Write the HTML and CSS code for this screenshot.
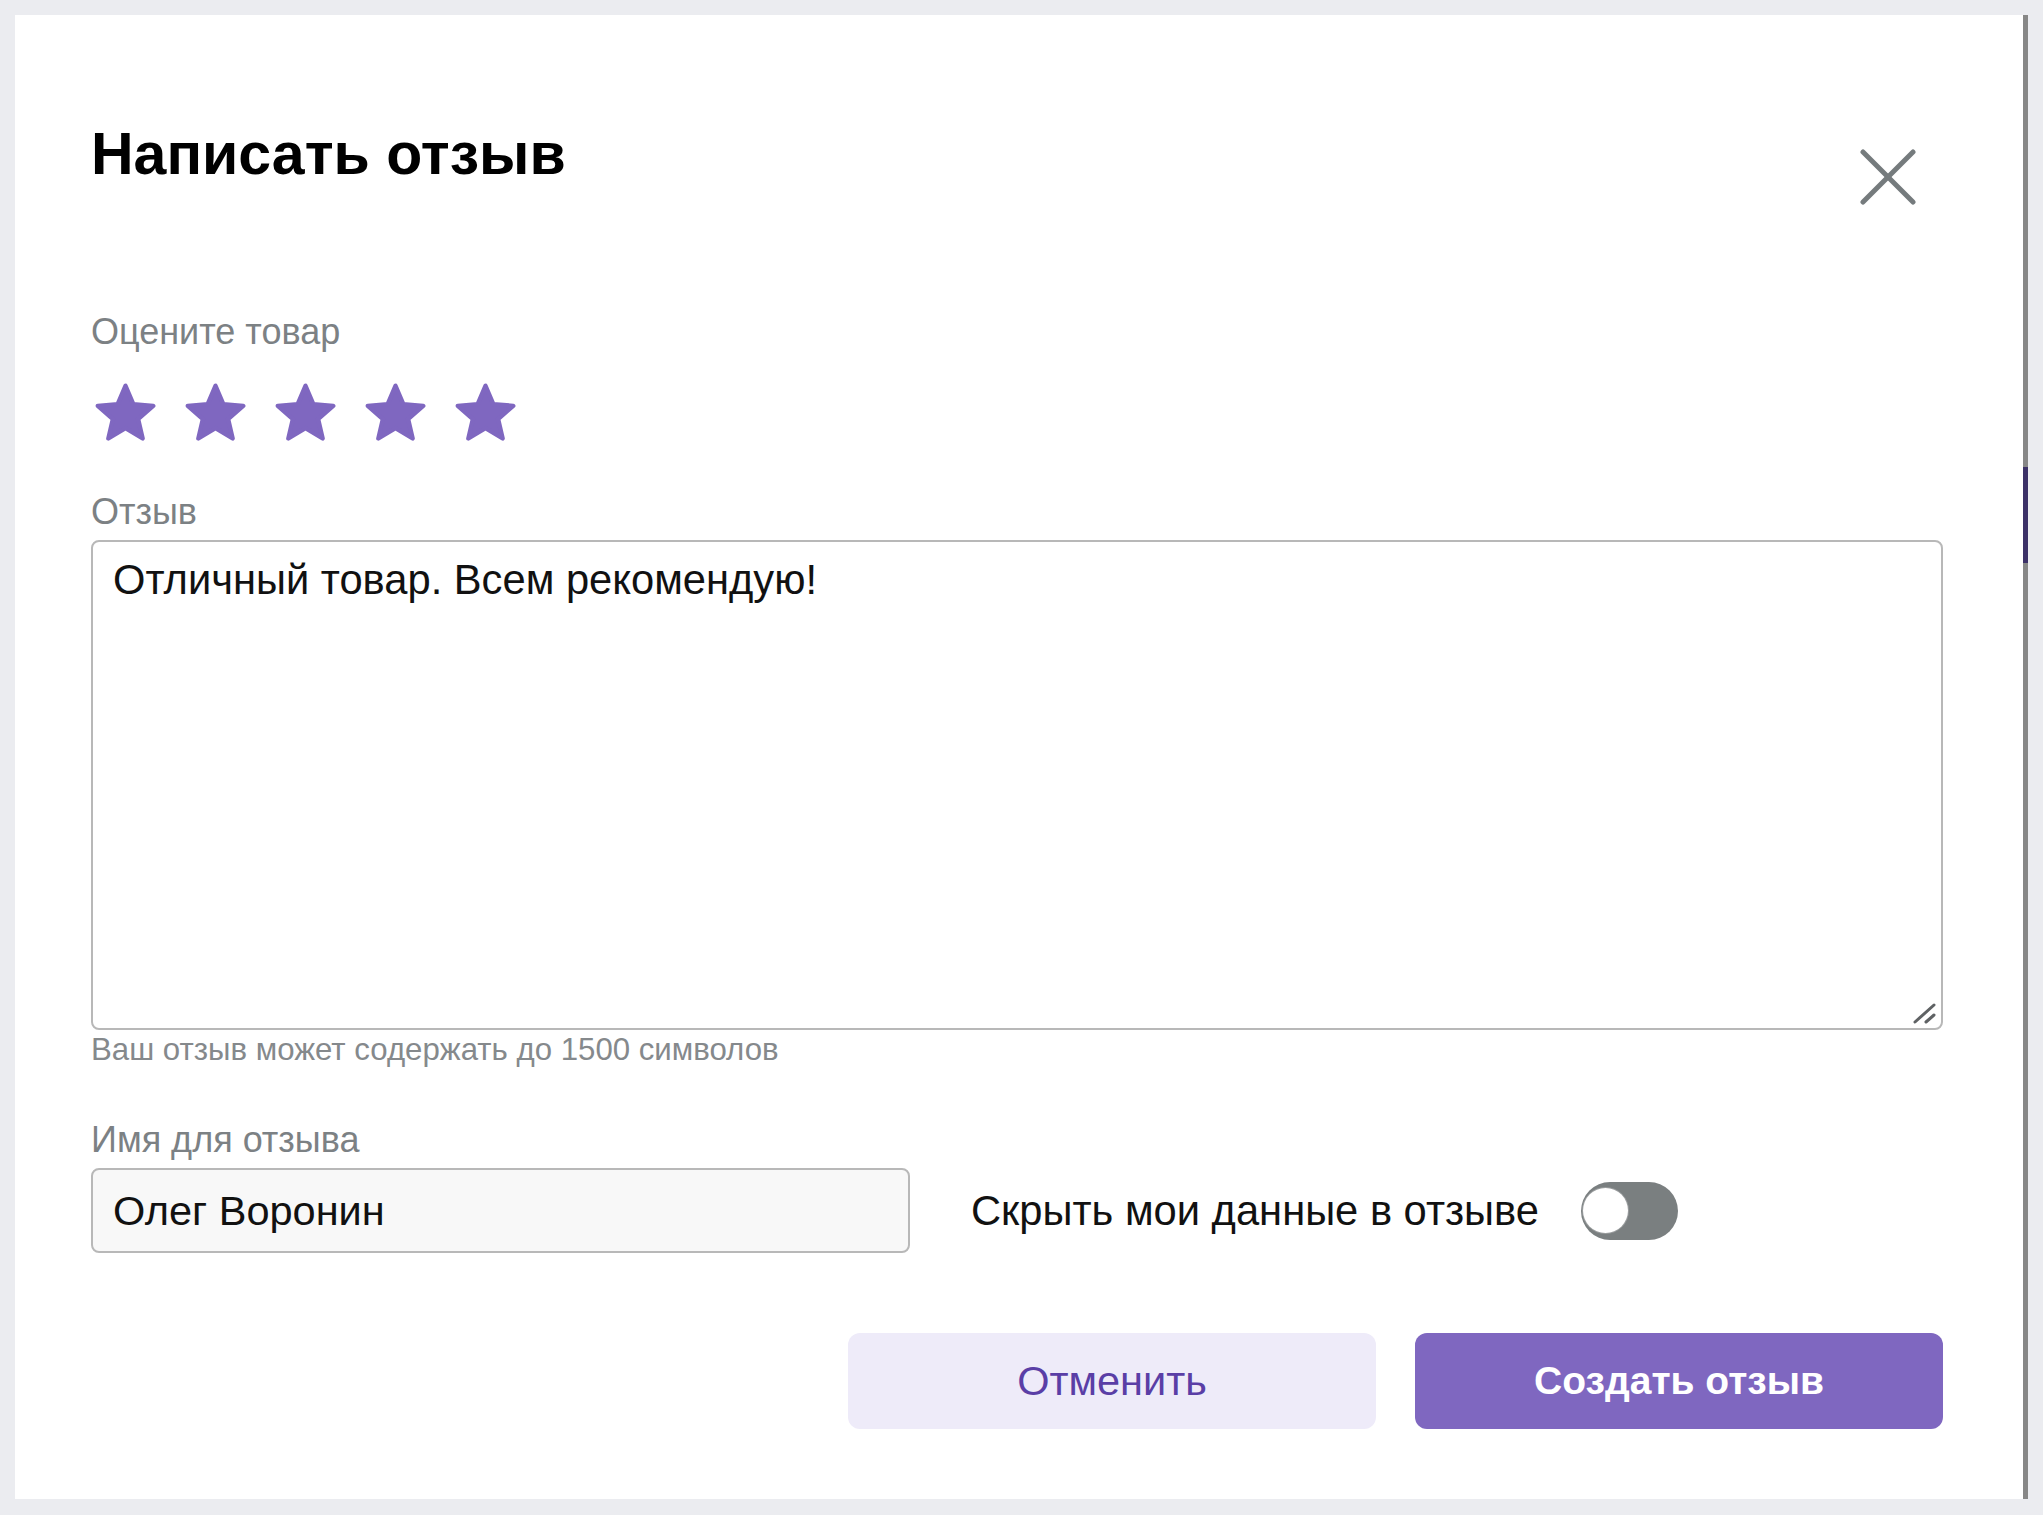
FILE: index.html
```html
<!DOCTYPE html>
<html lang="ru">
<head>
  <meta charset="UTF-8">
  <meta name="viewport" content="width=device-width, initial-scale=1.0">
  <title>Написать отзыв</title>
  <link rel="stylesheet" href="styles.css">
</head>
<body>
  <div class="modal">
    <!-- Заголовок -->
    <div class="modal-head">
      <h2 class="modal-title">Написать отзыв</h2>
      <button class="close-btn" type="button" title="Закрыть">
        <svg width="56" height="56" viewBox="0 0 56 56">
          <line x1="3" y1="3" x2="53" y2="53" />
          <line x1="53" y1="3" x2="3" y2="53" />
        </svg>
      </button>
    </div>

    <!-- Оценка -->
    <div class="field-label rate-label">Оцените товар</div>
    <div class="stars">
      <svg class="star" viewBox="1 1 22 22"><path d="M12 17.27L18.18 21l-1.64-7.03L22 9.24l-7.19-.61L12 2 9.19 8.63 2 9.24l5.46 4.73L5.82 21z"/></svg>
      <svg class="star" viewBox="1 1 22 22"><path d="M12 17.27L18.18 21l-1.64-7.03L22 9.24l-7.19-.61L12 2 9.19 8.63 2 9.24l5.46 4.73L5.82 21z"/></svg>
      <svg class="star" viewBox="1 1 22 22"><path d="M12 17.27L18.18 21l-1.64-7.03L22 9.24l-7.19-.61L12 2 9.19 8.63 2 9.24l5.46 4.73L5.82 21z"/></svg>
      <svg class="star" viewBox="1 1 22 22"><path d="M12 17.27L18.18 21l-1.64-7.03L22 9.24l-7.19-.61L12 2 9.19 8.63 2 9.24l5.46 4.73L5.82 21z"/></svg>
      <svg class="star" viewBox="1 1 22 22"><path d="M12 17.27L18.18 21l-1.64-7.03L22 9.24l-7.19-.61L12 2 9.19 8.63 2 9.24l5.46 4.73L5.82 21z"/></svg>
    </div>

    <!-- Текст отзыва -->
    <label class="field-label review-label" for="review">Отзыв</label>
    <div class="review-box">
      <textarea id="review" class="review-text">Отличный товар. Всем рекомендую!</textarea>
      <svg class="resize-grip" width="24" height="22" viewBox="0 0 24 22">
        <line x1="2" y1="20" x2="21" y2="3" />
        <line x1="13" y1="20" x2="21" y2="13" />
      </svg>
    </div>
    <div class="hint">Ваш отзыв может содержать до 1500 символов</div>

    <!-- Имя -->
    <label class="field-label name-label" for="name">Имя для отзыва</label>
    <div class="name-row">
      <input id="name" class="name-input" type="text" value="Олег Воронин">
      <span class="hide-text">Скрыть мои данные в отзыве</span>
      <span class="toggle"><span class="toggle-knob"></span></span>
    </div>

    <!-- Кнопки -->
    <div class="actions">
      <button type="button" class="btn btn-cancel">Отменить</button>
      <button type="button" class="btn btn-create">Создать отзыв</button>
    </div>

    <div class="scroll-mark"></div>
  </div>
</body>
</html>
```

FILE: styles.css
```css
/* Общие стили */
body {
  margin: 0;
  padding: 15px 0 0 15px;
  background-color: #ebecf0;
  font-family: "Liberation Sans", Arial, sans-serif;
  color: #111;
}

/* Окно */
.modal {
  position: relative;
  box-sizing: border-box;
  width: 2013px;
  height: 1484px;
  padding: 106px 80px 0 76px;
  background-color: #fff;
  border-right: 5px solid #878787;
}

.modal-head {
  display: flex;
  justify-content: space-between;
  align-items: flex-start;
  height: 66px;
}

.modal-title {
  margin: 0;
  font-size: 59px;
  line-height: 66px;
  font-weight: bold;
  color: #000;
}

.close-btn {
  margin: 28px 27px 0 0;
  padding: 0;
  border: none;
  background: none;
  cursor: pointer;
  line-height: 0;
}

.close-btn line {
  stroke: #757b7d;
  stroke-width: 5;
  stroke-linecap: round;
}

/* Подписи полей */
.field-label {
  display: block;
  font-size: 36px;
  line-height: 44px;
  color: #7c8184;
}

.rate-label {
  margin-top: 123px;
}

.review-label {
  margin-top: 46px;
  margin-bottom: 6px;
}

.name-label {
  margin-top: 49px;
  margin-bottom: 6px;
}

/* Звёзды */
.stars {
  display: flex;
  gap: 29px;
  margin-top: 29px;
  padding-left: 4px;
}

.star {
  width: 61px;
  height: 61px;
}

.star path {
  fill: #7f67c0;
  stroke: #7f67c0;
  stroke-width: 1.6;
  stroke-linejoin: round;
}

/* Текст отзыва */
.review-box {
  position: relative;
}

.review-text {
  display: block;
  box-sizing: border-box;
  width: 100%;
  height: 490px;
  padding: 13px 20px;
  border: 2px solid #b8b8b8;
  border-radius: 8px;
  font-family: "Liberation Sans", Arial, sans-serif;
  font-size: 41.7px;
  line-height: 50px;
  color: #111;
  resize: none;
  outline: none;
}

.resize-grip {
  position: absolute;
  right: 6px;
  bottom: 6px;
}

.resize-grip line {
  stroke: #5f6264;
  stroke-width: 3;
  stroke-linecap: round;
}

.hint {
  margin-top: 1px;
  font-size: 31.2px;
  line-height: 38px;
  color: #85898c;
}

/* Имя и переключатель */
.name-row {
  display: flex;
  align-items: center;
}

.name-input {
  box-sizing: border-box;
  width: 819px;
  height: 85px;
  padding: 0 20px;
  border: 2px solid #b8b8b8;
  border-radius: 8px;
  background-color: #f8f8f8;
  font-family: "Liberation Sans", Arial, sans-serif;
  font-size: 41.5px;
  color: #111;
  outline: none;
}

.hide-text {
  margin-left: 61px;
  font-size: 41.7px;
}

.toggle {
  position: relative;
  display: block;
  width: 97px;
  height: 58px;
  margin-left: 42px;
  border-radius: 29px;
  background-color: #7a7f80;
}

.toggle-knob {
  position: absolute;
  left: 2px;
  top: 6px;
  width: 45px;
  height: 45px;
  border-radius: 50%;
  background-color: #fff;
  box-shadow: 0 0 0 1px #9a9d9e;
}

/* Кнопки */
.actions {
  display: flex;
  justify-content: flex-end;
  gap: 39px;
  margin-top: 80px;
}

.btn {
  width: 528px;
  height: 96px;
  border: none;
  border-radius: 12px;
  font-family: "Liberation Sans", Arial, sans-serif;
  font-size: 41.5px;
  cursor: pointer;
}

.btn-cancel {
  background-color: #eeebf9;
  color: #5a3ea6;
}

.btn-create {
  background-color: #7f67c0;
  color: #fff;
  font-weight: bold;
  font-size: 39px;
}

/* Метка полосы прокрутки справа */
.scroll-mark {
  position: absolute;
  top: 452px;
  right: -5px;
  width: 5px;
  height: 96px;
  background-color: #3c3168;
}
```
